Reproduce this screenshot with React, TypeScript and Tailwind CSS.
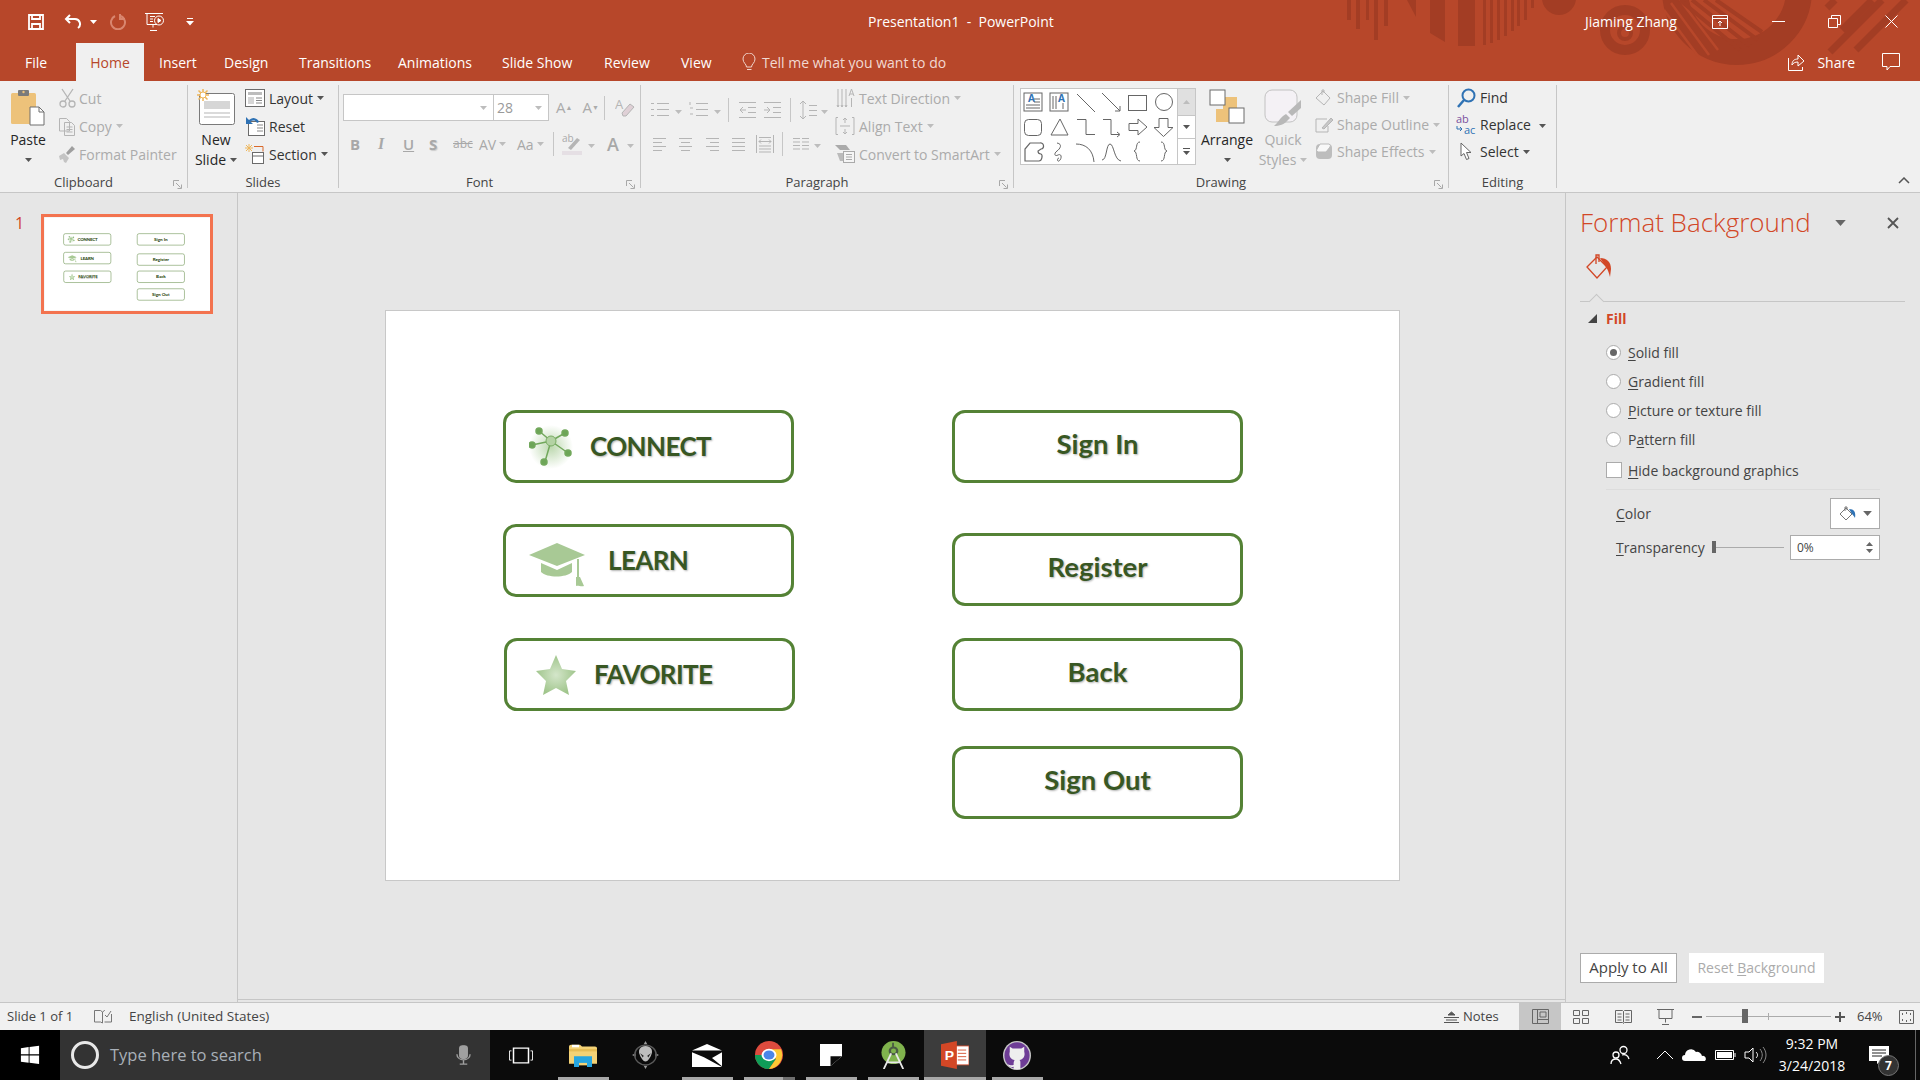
import type { ReactNode } from "react";

const Caret = ({ className = "fill-[#6a6a6a]" }: { className?: string }) => (
  <svg width="7" height="4" viewBox="0 0 7 4" className={`${className} inline-block shrink-0`}>
    <path d="M0 0h7L3.5 4z" />
  </svg>
);

const GRAY = "#b5b5b5";

function Launcher() {
  return (
    <svg width="9" height="9" viewBox="0 0 9 9" className="absolute right-[5px] bottom-[-1px]" fill="none" stroke="#a8a8a8">
      <path d="M.5 6V.5H6M3 3l4.500 4.500M8.500 4.500v4h-4" />
    </svg>
  );
}

function Group({ w, label, launcher, children }: { w: string; label: string; launcher?: boolean; children: ReactNode }) {
  return (
    <div className={`${w} relative h-[103px] shrink-0 border-r border-[#c6c6c6]`}>
      <div className="flex h-[87px]">{children}</div>
      <div className={`h-[16px] text-center text-[13px] leading-[21px] text-[#444] ${launcher ? "pr-[20px]" : ""}`}>{label}</div>
      {launcher && <Launcher />}
    </div>
  );
}

function Row({ icon, label, off, caret, iconW = "w-[22px]", tight }: { icon: ReactNode; label: ReactNode; off?: boolean; caret?: boolean; iconW?: string; tight?: boolean }) {
  return (
    <div className={`flex ${tight ? "h-[27px]" : "h-[28px]"} items-center whitespace-nowrap ${off ? "text-[#ababab]" : "text-[#333]"}`}>
      <span className={`${iconW} flex shrink-0 justify-center`}>{icon}</span>
      <span className="ml-[3px]">{label}</span>
      {caret && <span className="ml-[4px] flex"><Caret className={off ? "fill-[#bdbdbd]" : "fill-[#555]"} /></span>}
    </div>
  );
}

function Big({ w, icon, lines, off, caretLine }: { w: string; icon: ReactNode; lines: string[]; off?: boolean; caretLine?: boolean }) {
  return (
    <div className={`${w} flex shrink-0 flex-col items-center ${off ? "text-[#ababab]" : "text-[#262626]"}`}>
      <div className="flex h-[45px] w-full justify-center pt-[4px]">{icon}</div>
      {lines.map((l, i) => (
        <div key={l} className="flex h-[20px] items-center gap-[4px] whitespace-nowrap leading-[20px]">
          {l}
          {caretLine && i === lines.length - 1 && <Caret className={off ? "fill-[#bdbdbd]" : "fill-[#555]"} />}
        </div>
      ))}
      {!caretLine && (
        <div className="flex h-[20px] items-center"><Caret className="fill-[#555]" /></div>
      )}
    </div>
  );
}

const PasteIcon = () => (
  <svg width="36" height="37" viewBox="0 0 36 37">
    <rect x="1" y="4" width="25" height="31" rx="1.500" fill="#edc27a" />
    <rect x="8" y="1" width="11" height="6" rx="1" fill="#7b7b7b" />
    <circle cx="13.500" cy="3" r="1.200" fill="#edc27a" />
    <path d="M20 18h9l5 5v13H20z" fill="#fff" stroke="#6e6e6e" />
    <path d="M29 18v5h5" fill="none" stroke="#6e6e6e" />
  </svg>
);
const CutIcon = () => (
  <svg width="17" height="20" viewBox="0 0 17 20" fill="none" stroke={GRAY} strokeWidth="1.300">
    <path d="M3 1l8 12M14 1L6 13" />
    <circle cx="4" cy="16" r="3" />
    <circle cx="13" cy="16" r="3" />
  </svg>
);
const CopyIcon = () => (
  <svg width="18" height="19" viewBox="0 0 18 19" fill="none" stroke={GRAY}>
    <path d="M1.500 1.500h7l3 3V14h-10zM6.500 5.500h7l3 3v10h-10z" fill="#f0f0f0" />
    <path d="M8.500 10h6M8.500 12.500h6M8.500 15h6" />
  </svg>
);
const PainterIcon = () => (
  <svg width="18" height="18" viewBox="0 0 18 18">
    <path d="M1 11l5-3 5 5-3 5-2-1-1-3-3 1z" fill="#c4c4c4" />
    <path d="M8 8l6-7 3 3-7 6z" fill="#9f9f9f" />
  </svg>
);
const NewSlideIcon = () => (
  <svg width="40" height="37" viewBox="0 0 40 37">
    <rect x="3.500" y="4.500" width="35" height="31" rx="2" fill="#fff" stroke="#7a7a7a" />
    <rect x="8" y="12" width="26" height="8" fill="#d6d6d6" />
    <path d="M8 24h26M8 28h26" stroke="#b5b5b5" />
    <g stroke="#eeb75c" strokeWidth="1.500">
      <path d="M7 0v12M1 6h12M2.500 1.500l9 9M11.500 1.500l-9 9" />
    </g>
    <circle cx="7" cy="6" r="3" fill="#fff" stroke="#eeb75c" />
  </svg>
);
const LayoutIcon = () => (
  <svg width="20" height="18" viewBox="0 0 20 18">
    <rect x=".5" y=".5" width="19" height="17" fill="#fff" stroke="#6b6b6b" />
    <rect x="3" y="3" width="14" height="3" fill="#bdbdbd" />
    <rect x="3" y="8" width="6" height="7" fill="#d6d6d6" />
    <path d="M11 9h6M11 11.500h6M11 14h6" stroke="#888" />
  </svg>
);
const ResetIcon = () => (
  <svg width="21" height="20" viewBox="0 0 21 20">
    <rect x="3.500" y="5.500" width="16" height="14" fill="#fff" stroke="#6b6b6b" />
    <path d="M12 9h6M12 12h6M12 15h6" stroke="#888" />
    <path d="M1 1v7h7L5.500 5.500A4 4 0 0 1 12 7l2-1a6 6 0 0 0-10-2z" fill="#2f72b4" />
  </svg>
);
const SectionIcon = () => (
  <svg width="20" height="20" viewBox="0 0 20 20">
    <g stroke="#eeb75c"><path d="M4 0v8M0 4h8M1 1l6 6M7 1L1 7" /></g>
    <path d="M9 2.500h9v5" fill="none" stroke="#d9692b" />
    <rect x="7.500" y="8.500" width="11" height="11" fill="#fff" stroke="#6b6b6b" />
    <path d="M7 12h12" stroke="#6b6b6b" />
  </svg>
);

function FontGroup() {
  return (
    <div className="flex w-full flex-col pl-[4px] pt-[9px]">
      <div className="flex h-[27px] items-center">
        <div className="flex h-[27px] w-[151px] items-center justify-end border border-[#c6c6c6] bg-white pr-[6px]">
          <Caret className="fill-[#bdbdbd]" />
        </div>
        <div className="flex h-[27px] w-[55px] items-center justify-between border border-l-0 border-[#c6c6c6] bg-white pl-[3px] pr-[6px] leading-none text-[#9a9a9a]">
          28
          <Caret className="fill-[#bdbdbd]" />
        </div>
        <div className="ml-[7px] flex gap-[10px] text-[15px] leading-none text-[#ababab]">
          <span>A<sup className="text-[7px]">▲</sup></span>
          <span>A<sup className="text-[7px]">▼</sup></span>
        </div>
        <div className="ml-[5px] h-[24px] border-l border-[#c6c6c6]" />
        <svg width="20" height="22" viewBox="0 0 20 22" className="ml-[10px]">
          <text x="0" y="12" fontSize="13" fill="#b5b5b5">A</text>
          <path d="M7 16l8-9 4 3-8 9H8z" fill="#dfd0d6" stroke="#b5b5b5" />
        </svg>
      </div>
      <div className="mt-[11px] flex h-[24px] items-center text-[#a8a8a8]">
        <span className="ml-[7px] w-[26px] text-[15px] font-bold">B</span>
        <span className="w-[27px] pl-[2px] font-['Liberation_Serif',serif] text-[16px] font-bold italic">I</span>
        <span className="w-[26px] text-[15px] font-semibold underline">U</span>
        <span className="w-[24px] text-[15px] font-bold [text-shadow:1px_1px_1px_#ccc]">S</span>
        <span className="w-[26px] text-[12px] line-through">abc</span>
        <span className="flex w-[38px] items-center gap-[3px] text-[14px]">AV<Caret className="fill-[#bdbdbd]" /></span>
        <span className="flex w-[36px] items-center gap-[3px] text-[14px]">Aa<Caret className="fill-[#bdbdbd]" /></span>
        <div className="h-[24px] border-l border-[#c6c6c6]" />
        <svg width="24" height="22" viewBox="0 0 24 22" className="ml-[8px]">
          <text x="0" y="9" fontSize="10" fill="#aaa">ab</text>
          <path d="M6 15L15 5l3 2-9 10z" fill="#b5b5b5" />
          <rect x="0" y="18" width="20" height="4" fill="#e5dfe4" />
        </svg>
        <span className="ml-[2px] mr-[12px]"><Caret className="fill-[#bdbdbd]" /></span>
        <span className="text-[18px] font-semibold">A</span>
        <span className="ml-[8px]"><Caret className="fill-[#bdbdbd]" /></span>
      </div>
    </div>
  );
}

const Lines = ({ d, w = 16, h = 16 }: { d: string; w?: number; h?: number }) => (
  <svg width={w} height={h} viewBox={`0 0 ${w} ${h}`} fill="none" stroke={GRAY}>
    <path d={d} />
  </svg>
);

function ParagraphGroup() {
  return (
    <div className="flex">
      <div className="w-[193px] pt-[14px]">
        <div className="flex h-[22px] items-center">
          <span className="ml-[9px]"><Lines w={20} h={18} d="M7 2.500h12M7 8.500h12M7 14.500h12M1 2.500h3M1 8.500h3M1 14.500h3" /></span>
          <span className="ml-[5px]"><Caret className="fill-[#bdbdbd]" /></span>
          <span className="ml-[7px]"><Lines w={20} h={18} d="M7 2.500h12M7 8.500h12M7 14.500h12M1 1v3M1 7h3M1 13h3" /></span>
          <span className="ml-[5px]"><Caret className="fill-[#bdbdbd]" /></span>
          <div className="ml-[7px] h-[24px] border-l border-[#c6c6c6]" />
          <span className="ml-[9px]"><Lines w={19} h={18} d="M1 1.500h17M10 6.500h8M10 11.500h8M1 16.500h17M8 9H2M5 6L2 9l3 3" /></span>
          <span className="ml-[6px]"><Lines w={19} h={18} d="M1 1.500h17M10 6.500h8M10 11.500h8M1 16.500h17M1 9h6M4 6l3 3-3 3" /></span>
          <div className="ml-[8px] h-[24px] border-l border-[#c6c6c6]" />
          <span className="ml-[8px]"><Lines w={18} h={20} d="M4 1v18M1 4l3-3 3 3M1 16l3 3 3-3M10 5.500h8M10 10.500h8M10 15.500h8" /></span>
          <span className="ml-[4px]"><Caret className="fill-[#bdbdbd]" /></span>
        </div>
        <div className="mt-[12px] flex h-[22px] items-center">
          <span className="ml-[11px]"><Lines w={15} d="M1 2.500h13M1 6.500h9M1 10.500h13M1 14.500h9" /></span>
          <span className="ml-[11px]"><Lines w={15} d="M1 2.500h13M3 6.500h9M1 10.500h13M3 14.500h9" /></span>
          <span className="ml-[12px]"><Lines w={15} d="M1 2.500h13M5 6.500h9M1 10.500h13M5 14.500h9" /></span>
          <span className="ml-[11px]"><Lines w={15} d="M1 2.500h13M1 6.500h13M1 10.500h13M1 14.500h13" /></span>
          <span className="ml-[10px]"><Lines w={18} h={20} d="M.5 1v18M17.500 1v18M3 3.500h12M3 12h12M3 15h12M3 18h12M3 7.500h12M3 7.500l2-2M3 7.500l2 2M15 7.500l-2-2M15 7.500l-2 2" /></span>
          <div className="ml-[8px] h-[24px] border-l border-[#c6c6c6]" />
          <span className="ml-[9px]"><Lines w={18} h={14} d="M1 1.500h7M1 5h7M1 8.500h7M1 12h7M10 1.500h7M10 5h7M10 8.500h7M10 12h7" /></span>
          <span className="ml-[4px]"><Caret className="fill-[#bdbdbd]" /></span>
        </div>
      </div>
      <div className="mt-[-1px] flex flex-col">
        <Row off caret label="Text Direction" icon={<Lines w={19} h={22} d="M2 2v18M6 2v18M10 2v18M1 18l1 2 1-2M5 18l1 2 1-2M9 18l1 2 1-2M13 9l2.500-7L18 9M14 7h3M15.500 11v9" />} />
        <Row off caret label="Align Text" icon={<Lines w={20} h={20} d="M3 1.500H1v17h2M17 1.500h2v17h-2M5 10h10M10 2v5M8 4l2-2 2 2M10 18v-5M8 16l2 2 2-2" />} />
        <Row off caret label="Convert to SmartArt" icon={
          <svg width="20" height="18" viewBox="0 0 20 18"><path d="M0 0h11l4 5H5z" fill="#aaa" /><path d="M2 8h6l3 4-3 4H5z" fill="#bbb" /><rect x="8.500" y="6.500" width="11" height="11" fill="#f5f5f5" stroke="#aaa" /><path d="M11 9.500h6M11 12h6M11 14.500h6" stroke="#aaa" /></svg>
        } />
      </div>
    </div>
  );
}

const shapes: ReactNode[] = [
  <><rect x="1" y="2" width="18" height="18" fill="none" stroke="#666" /><text x="5" y="11" fontSize="10" fontWeight="700" fill="#2f72b4">A</text><path d="M11 8h6M11 11h6M3 14h14M3 17h14" stroke="#666" /></>,
  <><rect x="1" y="2" width="18" height="18" fill="none" stroke="#666" /><text x="9" y="11" fontSize="10" fontWeight="700" fill="#2f72b4">A</text><path d="M4 5v13M7 5v13M14 12v6" stroke="#666" /></>,
  <path d="M2 3l18 18" stroke="#666" fill="none" />,
  <path d="M1 2l18 18M14 20h5v-5" stroke="#666" fill="none" />,
  <rect x="1.500" y="4.500" width="18" height="15" fill="none" stroke="#666" />,
  <circle cx="11" cy="11" r="8.500" fill="none" stroke="#666" />,
  <rect x="1.500" y="3.500" width="17" height="16" rx="4" fill="none" stroke="#666" />,
  <path d="M11 3l8 16H2z" fill="none" stroke="#666" />,
  <path d="M2 3.500h9v15h9" fill="none" stroke="#666" />,
  <path d="M2 3.500h8v15h8M16 16l3 2.500-3 2.500" fill="none" stroke="#666" />,
  <path d="M2 7.500h9V3l9 8-9 8v-4.500H2z" fill="none" stroke="#666" />,
  <path d="M6 2.500h9v9h5l-9.500 9-9.500-9h5z" fill="none" stroke="#666" />,
  <path d="M2 20V8l5-6h10a3 3 0 0 1 1 6l-3 2a3 3 0 0 0 3 3c2 1 1 7-2 7z" fill="none" stroke="#666" strokeWidth="1.200" />,
  <path d="M8 2c6 1 3 6 0 8s-3 6 1 4 4 4 1 6c-2 1-2-3 0-3" fill="none" stroke="#666" />,
  <path d="M1 3c10 0 17 6 18 18" fill="none" stroke="#666" />,
  <path d="M1 19C6 19 5 3 9 3s4 16 11 17" fill="none" stroke="#666" />,
  <path d="M13 1c-5 0-2 8-6 9 4 1 1 10 6 10" fill="none" stroke="#666" />,
  <path d="M8 1c5 0 2 8 6 9-4 1-1 10-6 10" fill="none" stroke="#666" />,
];

function Gallery() {
  return (
    <div className="ml-[6px] mt-[3px] flex h-[77px] w-[176px] shrink-0 border border-[#c6c6c6] bg-white">
      <div className="grid w-[157px] grid-cols-[repeat(6,26px)] grid-rows-[repeat(3,25px)]">
        {shapes.map((s, i) => (
          <div key={i} className="flex items-center justify-center">
            <svg width="22" height="22" viewBox="0 0 22 22">{s}</svg>
          </div>
        ))}
      </div>
      <div className="flex w-[18px] flex-col border-l border-[#c6c6c6]">
        <div className="flex h-[26px] items-center justify-center bg-[#e0e0e0]"><Caret className="rotate-180 fill-[#bdbdbd]" /></div>
        <div className="flex h-[24px] items-center justify-center border-y border-[#c6c6c6]"><Caret className="fill-[#555]" /></div>
        <div className="flex h-[25px] flex-col items-center justify-center gap-[2px]"><span className="h-px w-[7px] bg-[#555]" /><Caret className="fill-[#555]" /></div>
      </div>
    </div>
  );
}

const ArrangeIcon = () => (
  <svg width="36" height="36" viewBox="0 0 36 36">
    <rect x="14" y="8" width="14" height="14" fill="#edc27a" />
    <rect x="7" y="20" width="14" height="13" fill="#edc27a" />
    <rect x="1" y="1" width="15" height="15" fill="#fff" stroke="#6b6b6b" />
    <rect x="20" y="19" width="15" height="15" fill="#fff" stroke="#6b6b6b" />
  </svg>
);
const QuickIcon = () => (
  <svg width="38" height="38" viewBox="0 0 38 38">
    <rect x="1" y="1" width="32" height="32" rx="7" fill="#f4f1f5" stroke="#c2c2c2" />
    <path d="M37 11v8l-9 8-4-4z" fill="#b8b8b8" />
    <path d="M22 25l4 4-3 3c-2 3-8 5-13 5 4-3 5-7 9-10z" fill="#b8b8b8" />
  </svg>
);

function Drawing() {
  return (
    <div className="flex">
      <Gallery />
      <Big w="w-[56px] ml-[3px]" icon={<ArrangeIcon />} lines={["Arrange"]} />
      <Big w="w-[56px]" off caretLine icon={<QuickIcon />} lines={["Quick", "Styles"]} />
      <div className="ml-[3px] mt-[-1px] flex flex-col">
        <Row tight off caret iconW="w-[20px]" label="Shape Fill" icon={<svg width="18" height="18" viewBox="0 0 18 18" fill="none" stroke={GRAY}><path d="M1 9l7-7 7 7-6 7z" /><path d="M7 6V1h2v3" /></svg>} />
        <Row tight off caret iconW="w-[20px]" label="Shape Outline" icon={<svg width="19" height="16" viewBox="0 0 19 16" fill="none" stroke={GRAY}><path d="M12 2H1v13h12V9" /><path d="M7 11l9-10 2 2-9 9z" fill="#c8c8c8" /></svg>} />
        <Row tight off caret iconW="w-[20px]" label="Shape Effects" icon={<svg width="18" height="17" viewBox="0 0 18 17"><rect x="1" y="1" width="16" height="15" rx="4" fill="#bdbdbd" /><path d="M5 1h9a2 2 0 0 1 1 3l-4 5H3a2 2 0 0 1-1-3z" fill="#f8f8f8" stroke="#bbb" /></svg>} />
      </div>
    </div>
  );
}

function Editing() {
  return (
    <div className="mt-[-1px] flex flex-col pl-[6px]">
      <Row tight label="Find" icon={<svg width="19" height="20" viewBox="0 0 19 20" fill="none" stroke="#2f72b4"><circle cx="11.500" cy="7.500" r="6" strokeWidth="2" /><path d="M7 12l-6 7" strokeWidth="2.500" /></svg>} />
      <div className="flex items-center">
        <Row tight label="Replace" icon={<svg width="21" height="21" viewBox="0 0 21 21"><text x="0" y="9" fontSize="11" fill="#7a4f9e">ab</text><text x="8" y="20" fontSize="11" fill="#2f72b4">ac</text><path d="M1 12v3h5M4 13l2 2-2 2" fill="none" stroke="#2f72b4" /></svg>} />
        <span className="ml-[8px]"><Caret className="fill-[#555]" /></span>
      </div>
      <Row tight caret label="Select" icon={<svg width="12" height="19" viewBox="0 0 12 19" fill="#fff" stroke="#666"><path d="M1 1v13l3-2.500 2.500 6 2.500-1-2.500-6H11z" /></svg>} />
    </div>
  );
}

function Ribbon() {
  return (
    <div className="relative flex h-[112px] border-b border-[#c6c6c6] bg-[#f0f0f0] pt-[4px] text-[14px]">
      <Group w="w-[188px]" label="Clipboard" launcher>
        <Big w="w-[56px]" icon={<PasteIcon />} lines={["Paste"]} />
        <div className="mt-[-1px] flex flex-col pl-[2px]">
          <Row off iconW="w-[18px]" label="Cut" icon={<CutIcon />} />
          <Row off caret iconW="w-[18px]" label="Copy" icon={<CopyIcon />} />
          <Row off iconW="w-[18px]" label="Format Painter" icon={<PainterIcon />} />
        </div>
      </Group>
      <Group w="w-[151px]" label="Slides">
        <Big w="w-[56px]" caretLine icon={<NewSlideIcon />} lines={["New", "Slide"]} />
        <div className="mt-[-1px] flex flex-col">
          <Row caret label="Layout" icon={<LayoutIcon />} />
          <Row label="Reset" icon={<ResetIcon />} />
          <Row caret label="Section" icon={<SectionIcon />} />
        </div>
      </Group>
      <Group w="w-[302px]" label="Font" launcher><FontGroup /></Group>
      <Group w="w-[373px]" label="Paragraph" launcher><ParagraphGroup /></Group>
      <Group w="w-[435px]" label="Drawing" launcher><Drawing /></Group>
      <Group w="w-[108px]" label="Editing"><Editing /></Group>
      <svg width="12" height="7" viewBox="0 0 12 7" className="absolute bottom-[8px] right-[10px]" fill="none" stroke="#555" strokeWidth="1.500">
        <path d="M1 6l5-5 5 5" />
      </svg>
    </div>
  );
}

function TitleArt() {
  return (
    <svg width="1920" height="81" viewBox="0 0 1920 81" className="absolute left-0 top-0" fill="#a33d24">
      <path d="M1347 0h4v20h-4zM1356 0h4v29h-4zM1366 0h3v20h-3zM1374 0h4v40h-4zM1384 0h4v26h-4z" />
      <path d="M1407 0h9v17zM1430 0h15v42l-15-9zM1458 0h17v46h-17z" />
      <path d="M1483 0h3v45h-3zM1490 0h3v43h-3zM1497 0h3v40h-3zM1504 0h3v36h-3zM1511 0h3v31h-3zM1517 0h3v26h-3zM1524 0h3v20h-3zM1531 0h3v8h-3z" />
      <ellipse cx="1559" cy="-2" rx="17" ry="17" />
      <circle cx="1625" cy="30" r="20" fill="none" stroke="#a33d24" strokeWidth="10" />
      <circle cx="1625" cy="33" r="6" fill="none" stroke="#a33d24" strokeWidth="4" />
      <circle cx="1737" cy="-10" r="62" fill="none" stroke="#a33d24" strokeWidth="26" />
      <g stroke="#b7472a" strokeWidth="2.500" fill="none">
        <path d="M1664 10l34 46M1671 3l38 52M1680 0l38 50" />
      </g>
      <g stroke="#a33d24" strokeWidth="4" fill="none">
        <path d="M1680 0l60 50M1692 0l58 46M1704 0l54 40M1716 0l46 32" />
      </g>
      <g stroke="#a33d24" strokeWidth="7" fill="none">
        <path d="M1827 8l8-8M1842 30l30-30M1830 52l52-52M1856 50l50-50" />
      </g>
    </svg>
  );
}

function TitleBar() {
  const tabs = [
    ["Insert", "w-[65px]"],
    ["Design", "w-[75px]"],
    ["Transitions", "w-[99px]"],
    ["Animations", "w-[104px]"],
    ["Slide Show", "w-[102px]"],
    ["Review", "w-[77px]"],
    ["View", "w-[61px]"],
  ];
  return (
    <div className="relative h-[81px] bg-[#b7472a] text-white">
      <TitleArt />
      <div className="relative flex h-[43px] items-center">
        <svg width="16" height="16" viewBox="0 0 16 16" className="ml-[28px]" fill="none" stroke="#fff" strokeWidth="1.800">
          <path d="M1 1h14v14H1z" /><path d="M4 1v4h8V1M4 15v-5h8v5" />
        </svg>
        <svg width="18" height="16" viewBox="0 0 18 16" className="ml-[20px]" fill="none" stroke="#fff" strokeWidth="2">
          <path d="M6 1L2 5l4 4M2 5h9a5 5 0 0 1 3 9" />
        </svg>
        <Caret className="ml-[8px] fill-white" />
        <svg width="16" height="17" viewBox="0 0 16 17" className="ml-[13px]" fill="none" stroke="#d9866f" strokeWidth="2">
          <path d="M5 3a7 7 0 1 0 6 0M10 1v5h5" />
        </svg>
        <svg width="20" height="19" viewBox="0 0 20 19" className="ml-[19px]" fill="none" stroke="#fff">
          <path d="M0 1.500h18M2 1.500v11h10M8 12.500v3M5 18.500h7" />
          <path d="M5 4.500h5M5 7h3M5 9.500h3" />
          <circle cx="14" cy="8.500" r="4.500" />
          <path d="M13 6.500l3 2-3 2z" fill="#fff" />
        </svg>
        <svg width="8" height="8" viewBox="0 0 8 8" className="ml-[21px]" fill="#fff">
          <path d="M1 0h6v1H1zM0 3h8L4 7.500z" />
        </svg>
        <div className="ml-[674px] w-[190px] whitespace-nowrap text-[14px]">Presentation1&nbsp; - &nbsp;PowerPoint</div>
        <div className="ml-[527px] w-[102px] whitespace-nowrap text-[14px]">Jiaming Zhang</div>
        <svg width="16" height="14" viewBox="0 0 16 14" className="ml-[25px]" fill="none" stroke="#fff">
          <path d="M.5.500h15v13H.5zM.5 3.500h15M8 11V6M6 8l2-2 2 2" />
        </svg>
        <span className="ml-[44px] h-px w-[13px] bg-white" />
        <svg width="13" height="13" viewBox="0 0 13 13" className="ml-[43px]" fill="none" stroke="#fff">
          <path d="M.5 3.500h9v9h-9zM3.500 3.500v-3h9v9h-3" />
        </svg>
        <svg width="13" height="13" viewBox="0 0 13 13" className="ml-[44px]" fill="none" stroke="#fff">
          <path d="M.5.500l12 12M12.500.500l-12 12" />
        </svg>
      </div>
      <div className="relative flex h-[38px] items-center whitespace-nowrap text-[14px]">
        <span className="w-[76px] pl-[25px]">File</span>
        <div className="flex h-[38px] w-[68px] items-center justify-center bg-[#f0f0f0] text-[#b7472a]">Home</div>
        <span className="w-[15px]" />
        {tabs.map(([t, m]) => (
          <span key={t} className={m}>{t}</span>
        ))}
        <svg width="14" height="19" viewBox="0 0 14 19" fill="none" stroke="#f0d5cc">
          <path d="M4.500 14c0-3-3.500-4-3.500-8a6 6 0 0 1 12 0c0 4-3.500 5-3.500 8zM5 16.500h4.500" />
        </svg>
        <span className="ml-[6px] text-[#f2d9d2]">Tell me what you want to do</span>
        <svg width="17" height="18" viewBox="0 0 17 18" className="ml-auto" fill="none" stroke="#fff">
          <path d="M.5 5v12.500h14V14M4 12c0-4 2-6 6-6V2l6 6-6 5V9c-3 0-5 1-6 3z" />
        </svg>
        <span className="ml-[12px]">Share</span>
        <svg width="18" height="18" viewBox="0 0 18 18" className="ml-[27px] mr-[20px]" fill="none" stroke="#fff">
          <path d="M.5.500h17v13H8l-3 3.500v-3.500H.500z" />
        </svg>
      </div>
    </div>
  );
}

function SlideBtn({ children, className = "" }: { children: ReactNode; className?: string }) {
  return (
    <div className={`flex h-[73px] w-[291px] items-center rounded-[13px] border-[3px] border-[#548235] font-['Lato','Carlito',sans-serif] font-bold text-[#385723] [text-shadow:1px_1px_2px_rgba(0,0,0,0.3)] ${className}`}>
      {children}
    </div>
  );
}

const capsText = "text-[26px] tracking-[-0.6px]";
const nameText = "text-[27.5px] justify-center pb-[5px]";

function Slide() {
  return (
    <div className="flex h-[571px] w-[1015px] gap-[157px] border border-[#c8c8c8] bg-white pl-[117px] pt-[99px]">
      <div className="flex flex-col">
        <SlideBtn className={`pl-[23px] ${capsText}`}>
          <svg width="44" height="44" viewBox="0 0 44 44" className="shrink-0">
            <defs>
              <radialGradient id="cg"><stop offset="0" stopColor="#bcd8ae" /><stop offset="1" stopColor="#fff" /></radialGradient>
            </defs>
            <circle cx="22" cy="22" r="22" fill="url(#cg)" />
            <g stroke="#72a85c" strokeWidth="1.500" fill="#6da557">
              <path d="M22 16L10 6M22 16l14-8M22 16L3 20M22 16l17 12M22 16l-7 24" fill="none" />
              <circle cx="10" cy="6" r="3" /><circle cx="36" cy="8" r="3" /><circle cx="3" cy="20" r="3" /><circle cx="39" cy="28" r="3" /><circle cx="15" cy="37" r="3" />
            </g>
            <circle cx="22" cy="16" r="5" fill="#b3d2a3" stroke="#7aad65" />
          </svg>
          <span className="ml-[17px]">CONNECT</span>
        </SlideBtn>
        <SlideBtn className={`mt-[41px] pl-[23px] ${capsText}`}>
          <svg width="56" height="52" viewBox="0 0 56 52" className="shrink-0" fill="#a8c995">
            <path d="M28 8L56 20 28 31 0 20z" />
            <path d="M12 28l16 7 15-7v9c-6 6-25 6-31 0z" />
            <path d="M48 24h2v18h-2z" />
            <path d="M47 42h4l4 9c-3 1-6-1-8 0z" />
          </svg>
          <span className="ml-[23px]">LEARN</span>
        </SlideBtn>
        <SlideBtn className={`ml-[1px] mt-[41px] pl-[29px] ${capsText}`}>
          <svg width="40" height="42" viewBox="0 0 40 42" className="shrink-0">
            <defs>
              <radialGradient id="sg"><stop offset="0" stopColor="#d4e6ca" /><stop offset="1" stopColor="#a0c58c" /></radialGradient>
            </defs>
            <path d="M20 1l6 14 14 2-10 10 3 14-13-7-13 7 3-14L0 17l14-2z" fill="url(#sg)" />
          </svg>
          <span className="ml-[18px]">FAVORITE</span>
        </SlideBtn>
      </div>
      <div className="flex flex-col text-center">
        <SlideBtn className={nameText}>Sign In</SlideBtn>
        <SlideBtn className={`mt-[50px] ${nameText}`}>Register</SlideBtn>
        <SlideBtn className={`mt-[32px] ${nameText}`}>Back</SlideBtn>
        <SlideBtn className={`mt-[35px] ${nameText}`}>Sign Out</SlideBtn>
      </div>
    </div>
  );
}

function Mn({ k, rest, pre = "" }: { k: string; rest: string; pre?: string }) {
  return <span>{pre}<span className="underline underline-offset-2">{k}</span>{rest}</span>;
}

function Radio({ on, children }: { on?: boolean; children: ReactNode }) {
  return (
    <div className="flex h-[29px] items-center">
      <span className="flex h-[15px] w-[15px] items-center justify-center rounded-full border border-[#ababab] bg-white">
        {on && <span className="h-[7px] w-[7px] rounded-full bg-[#666]" />}
      </span>
      <span className="ml-[7px]">{children}</span>
    </div>
  );
}

const BucketIcon = () => (
  <svg width="18" height="16" viewBox="0 0 18 16" fill="none" stroke="#777">
    <path d="M1 8l6-6 6 6-6 6z" fill="#fff" /><path d="M6 5V1h2v3" />
    <path d="M10 3c5 0 7 3 6 9-1-2-2-3-3-4z" fill="#2f72b4" stroke="none" />
  </svg>
);

function FormatPane() {
  return (
    <div className="flex w-[355px] shrink-0 flex-col border-l border-[#c6c6c6] text-[14px] text-[#444]">
      <div className="mt-[12px] flex h-[35px] items-center pl-[14px]">
        <span className="w-[255px] whitespace-nowrap text-[26px] font-light text-[#d24726]">Format Background</span>
        <Caret className="h-[6px] w-[11px] fill-[#666]" />
        <svg width="12" height="12" viewBox="0 0 12 12" stroke="#555" strokeWidth="1.800" className="ml-[41px]">
          <path d="M1 1l10 10M11 1L1 11" />
        </svg>
      </div>
      <svg width="28" height="28" viewBox="0 0 28 28" className="ml-[20px] mt-[14px]" fill="none" stroke="#d24726" strokeWidth="1.300">
        <path d="M1 13L11 3l10 10-10 11z" />
        <path d="M10 10V1h3v7" />
        <path d="M14 4c7 0 11 4 11 11l-1 8c-1-4-2-7-4-10z" fill="#d24726" stroke="none" />
      </svg>
      <div className="relative ml-[14px] mt-[19px] h-px w-[325px] bg-[#c6c6c6]">
        <span className="absolute left-[11px] top-[-5px] h-[11px] w-[11px] rotate-45 border-l border-t border-[#c6c6c6] bg-[#e6e6e6]" />
      </div>
      <div className="mt-[8px] flex h-[16px] items-center pl-[22px]">
        <svg width="9" height="9" viewBox="0 0 9 9" fill="#444"><path d="M9 0v9H0z" /></svg>
        <span className="ml-[9px] font-bold text-[#d24726]">Fill</span>
      </div>
      <div className="ml-[40px] mt-[12px] w-[274px]">
        <Radio on><Mn k="S" rest="olid fill" /></Radio>
        <Radio><Mn k="G" rest="radient fill" /></Radio>
        <Radio><Mn k="P" rest="icture or texture fill" /></Radio>
        <Radio><Mn pre="P" k="a" rest="ttern fill" /></Radio>
        <div className="flex h-[36px] items-center border-b border-[#dcdcdc] pb-[3px]">
          <span className="h-[16px] w-[16px] border border-[#ababab] bg-white" />
          <span className="ml-[6px]"><Mn k="H" rest="ide background graphics" /></span>
        </div>
      </div>
      <div className="ml-[50px] mt-[8px] flex h-[31px] w-[264px] items-center justify-between">
        <Mn k="C" rest="olor" />
        <div className="flex h-[31px] w-[50px] items-center justify-center gap-[6px] border border-[#ababab] bg-white">
          <BucketIcon />
          <Caret className="h-[5px] w-[9px] fill-[#666]" />
        </div>
      </div>
      <div className="ml-[50px] mt-[6px] flex h-[25px] w-[264px] items-center">
        <span className="w-[96px]"><Mn k="T" rest="ransparency" /></span>
        <div className="relative h-px w-[72px] bg-[#ababab]">
          <span className="absolute left-0 top-[-6px] h-[12px] w-[4px] bg-[#666]" />
        </div>
        <div className="ml-[6px] flex h-[25px] w-[90px] items-center justify-between border border-[#ababab] bg-white pl-[6px] pr-[6px] text-[12px]">
          0%
          <span className="flex flex-col gap-[3px]">
            <Caret className="rotate-180 fill-[#666]" />
            <Caret className="fill-[#666]" />
          </span>
        </div>
      </div>
      <div className="mb-[19px] ml-[14px] mt-auto flex gap-[12px] whitespace-nowrap">
        <div className="flex h-[30px] w-[97px] items-center justify-center border border-[#ababab] bg-white pb-[2px] text-[15px]"><span>App<span className="underline underline-offset-2">l</span>y to All</span></div>
        <div className="flex h-[30px] w-[135px] items-center justify-center bg-white pb-[2px] text-[#ababab]"><Mn pre="Reset " k="B" rest="ackground" /></div>
      </div>
    </div>
  );
}

function Main() {
  return (
    <div className="flex h-[810px] border-b border-[#c6c6c6] bg-[#e6e6e6]">
      <div className="flex w-[238px] shrink-0 border-r border-[#c6c6c6]">
        <span className="ml-[15px] mt-[18px] text-[16px] leading-[24px] text-[#d24726]">1</span>
        <div className="relative ml-[17px] mt-[21px] h-[100px] w-[172px] overflow-hidden border-[3px] border-[#f3734f] bg-white">
          <div className="absolute left-0 top-0 origin-top-left scale-[0.164]"><Slide /></div>
        </div>
      </div>
      <div className="flex flex-1 flex-col">
        <div className="flex h-[807px] border-b border-[#c6c6c6] pl-[147px] pt-[117px]">
          <Slide />
        </div>
      </div>
      <FormatPane />
    </div>
  );
}

function StatusBar() {
  return (
    <div className="flex h-[27px] items-center whitespace-nowrap bg-[#f1f1f1] text-[13px] text-[#444]">
      <span className="ml-[7px] w-[87px]">Slide 1 of 1</span>
      <svg width="18" height="14" viewBox="0 0 18 14" fill="none" stroke="#777">
        <path d="M.5.500h6l2 1.500 2-1.500H10M8.500 2v11M8.500 13l-2-1H.5V.5M10.500 12h7V4M11 5l2 2 4-6" />
      </svg>
      <span className="ml-[17px] text-[13.5px]">English (United States)</span>
      <svg width="15" height="12" viewBox="0 0 15 12" className="ml-auto" fill="none" stroke="#555">
        <path d="M4 4l3.500-3L11 4z" fill="#555" /><path d="M0 6.500h15M2 9h11M0 11.500h15" />
      </svg>
      <span className="ml-[4px] w-[35px]">Notes</span>
      <div className="ml-[21px] flex h-[27px] w-[42px] items-center justify-center bg-[#c6c6c6]">
        <svg width="17" height="15" viewBox="0 0 17 15" fill="none" stroke="#666"><path d="M.5.500h16v14H.5zM5.500.5v14M5.500 10.500h11M8 3h6v5H8z" /></svg>
      </div>
      <svg width="16" height="14" viewBox="0 0 16 14" className="ml-[12px]" fill="none" stroke="#666"><path d="M.5.500h6v5h-6zM9.500.5h6v5h-6zM.5 8.500h6v5h-6zM9.500 8.500h6v5h-6z" /></svg>
      <svg width="17" height="14" viewBox="0 0 17 14" className="ml-[26px]" fill="none" stroke="#666"><path d="M.5.500h7l1 1 1-1h7v12h-7l-1 1-1-1h-7zM8.500 1.500v11M2.500 4h4M2.500 7h4M2.500 10h4M10.500 4h4M10.500 7h4M10.500 10h4" /></svg>
      <svg width="17" height="16" viewBox="0 0 17 16" className="ml-[25px]" fill="none" stroke="#666"><path d="M0 .5h17M2 .5v9h13v-9M8.500 9.500v4M5 15.500h7" /></svg>
      <span className="ml-[18px] h-[2px] w-[10px] bg-[#666]" />
      <div className="relative ml-[4px] h-px w-[125px] bg-[#ababab]">
        <span className="absolute left-[36px] top-[-7px] h-[14px] w-[6px] bg-[#666]" />
        <span className="absolute left-[62px] top-[-3px] h-[7px] w-px bg-[#ababab]" />
      </div>
      <span className="relative ml-[4px] h-[10px] w-[10px]">
        <span className="absolute left-0 top-[4px] h-[2px] w-[10px] bg-[#555]" />
        <span className="absolute left-[4px] top-0 h-[10px] w-[2px] bg-[#555]" />
      </span>
      <span className="ml-[12px] w-[42px]">64%</span>
      <svg width="15" height="14" viewBox="0 0 15 14" className="mr-[6px]" fill="none" stroke="#666"><path d="M.5.500h14v13H.5zM4 3l-1 1 1 1M11 3l1 1-1 1M7.500 2v2M7.500 10v2M4 9l-1 1 1 1M11 9l1 1-1 1" /></svg>
    </div>
  );
}

function Slot({ on, children, bg, extra }: { on?: boolean; children: ReactNode; bg?: boolean; extra?: boolean }) {
  return (
    <div className={`relative flex h-[50px] w-[62px] shrink-0 items-center justify-center ${bg ? "bg-[#3c3c3c]" : ""}`}>
      {children}
      {on && <span className={`absolute bottom-0 h-[3px] bg-[#a8a8a8] ${bg ? "left-0 right-0" : "left-[6px] right-[5px]"}`} />}
      {extra && <span className="absolute bottom-0 right-[5px] h-[3px] w-[12px] bg-[#6f6f6f]" />}
    </div>
  );
}

function Taskbar() {
  return (
    <div className="flex h-[50px] items-center bg-[#0b0b0b] text-white">
      <div className="flex h-[50px] w-[60px] shrink-0 items-center justify-center bg-black">
        <svg width="20" height="20" viewBox="0 0 22 22" fill="#fff"><path d="M1 3.500l8.500-1.200v8H1zM10.500 2.200L21 .8v9.500H10.500zM1 11.500h8.500v8L1 18.300zM10.500 11.500H21V21l-10.500-1.400z" /></svg>
      </div>
      <div className="flex h-[50px] w-[430px] shrink-0 items-center bg-[#333]">
        <span className="ml-[11px] h-[28px] w-[28px] rounded-full border-[3px] border-[#e8e8e8]" />
        <span className="ml-[11px] w-[346px] text-[16.5px] text-[#a9b0b8]">Type here to search</span>
        <svg width="15" height="20" viewBox="0 0 16 24" preserveAspectRatio="none" fill="none" stroke="#a0a0a0" strokeWidth="1.500"><rect x="4" y="1" width="8" height="15" rx="3" fill="#a0a0a0" /><path d="M1 11c0 9 14 9 14 0M8 18v5M4 23h8" /></svg>
      </div>
      <Slot><svg width="24" height="17" viewBox="0 0 24 22" preserveAspectRatio="none" fill="none" stroke="#fff"><path d="M4.500 1.500h15v19h-15z" strokeWidth="1.500" /><path d="M2.500 5H.500v12h2M21.500 5h2v12h-2" /></svg></Slot>
      <Slot on>
        <svg width="28" height="23" viewBox="0 0 28 28" preserveAspectRatio="none">
          <path d="M0 3a2 2 0 0 1 2-2h9l2 2h13a2 2 0 0 1 2 2v19H0z" fill="#f4d276" /><path d="M0 6h28v3H0z" fill="#e7bd55" /><rect x="3" y="1" width="7" height="3" fill="#fff" /><path d="M5 15h18v13h-5v-5h-8v5H5z" fill="#27a6e1" /><rect x="10" y="23" width="8" height="3" fill="#f4d276" />
        </svg>
      </Slot>
      <Slot>
        <svg width="27" height="28" viewBox="0 0 30 34" preserveAspectRatio="none">
          <path d="M15 0l2 4h-4zM15 34l-2-4h4zM0 17l4-2v4zM30 17l-4 2v-4z" fill="#9a9a9a" />
          <circle cx="15" cy="17" r="12" fill="none" stroke="#5a5a5a" strokeWidth="1.500" />
          <path d="M15 6c6 0 8 5 7 9s-4 10-7 10-6-6-7-10 1-9 7-9z" fill="#bdbdbd" />
          <path d="M9 15l4 3-1 2zM21 15l-4 3 1 2z" fill="#222" />
        </svg>
      </Slot>
      <Slot on>
        <svg width="30" height="23" viewBox="0 0 30 28" preserveAspectRatio="none" fill="#fff"><path d="M15 0l15 8H0z" /><path d="M0 10l12 6L30 28H0zM30 10v17L20 17z" /></svg>
      </Slot>
      <Slot on extra>
        <svg width="28" height="28" viewBox="0 0 28 34" preserveAspectRatio="none">
          <ellipse cx="14" cy="17" rx="14" ry="17" fill="#dd4b3e" />
          <path d="M0 17a14 17 0 0 0 14 17l7-12-7-5z" fill="#0f9d58" />
          <path d="M14 10h12a14 17 0 0 1-12 24l7-12z" fill="#fcc934" />
          <circle cx="14" cy="17" r="7.500" fill="#fff" /><circle cx="14" cy="17" r="5.500" fill="#4a86e8" />
        </svg>
      </Slot>
      <Slot on>
        <svg width="22" height="22" viewBox="0 0 23 29" preserveAspectRatio="none"><path d="M0 0h23v16l-12 13H0z" fill="#fff" /><path d="M23 16L11 29V16z" fill="#0b0b0b" /></svg>
      </Slot>
      <Slot on>
        <svg width="25" height="28" viewBox="0 0 27 34" preserveAspectRatio="none">
          <ellipse cx="13.500" cy="14" rx="13" ry="14" fill="#80b34d" />
          <circle cx="13.500" cy="12" r="4" fill="none" stroke="#4a5b44" strokeWidth="2.500" />
          <path d="M13 2v6" stroke="#4a5b44" strokeWidth="2" />
          <path d="M11 15L3 34M16 15l8 19M6 26h15" stroke="#e8e8e8" strokeWidth="2" fill="none" />
        </svg>
      </Slot>
      <Slot on bg>
        <svg width="28" height="28" viewBox="0 0 30 34" preserveAspectRatio="none">
          <rect x="14" y="6" width="16" height="23" fill="#fff" stroke="#d24726" />
          <path d="M18 11h9M18 15h9M18 19h9M18 23h9" stroke="#d24726" />
          <path d="M0 4L17 0v34L0 30z" fill="#d24726" />
          <text x="4" y="23" fontSize="15" fontWeight="700" fill="#fff" fontFamily="Liberation Sans, sans-serif">P</text>
        </svg>
      </Slot>
      <Slot on>
        <svg width="28" height="29" viewBox="0 0 29 35" preserveAspectRatio="none">
          <ellipse cx="14.500" cy="17.500" rx="14.500" ry="17.500" fill="#c8c8c8" />
          <ellipse cx="14.500" cy="17.500" rx="13" ry="16" fill="#6e3d96" />
          <path d="M7 7l3 2h9l3-2v6c1 4 0 9-5 10 1 1 1 2 1 3v8h-7v-3c-3 1-5 0-6-3 2 1 3 2 6 1 0-3 0-4 1-6-5-1-6-6-5-10z" fill="#eee" />
        </svg>
      </Slot>
      <div className="ml-auto flex h-[50px] items-center">
        <svg width="20" height="20" viewBox="0 0 20 20" fill="none" stroke="#fff" strokeWidth="1.300" className="mx-[5px]">
          <circle cx="13.500" cy="5" r="3.500" /><circle cx="6" cy="10" r="3" /><path d="M1 19c0-3 2-5 5-5s4 2 5 5M12 10c3-1 6 0 7 4" />
        </svg>
        <span className="w-[15px]" />
        <svg width="30" height="10" viewBox="0 0 30 10" fill="none" stroke="#fff"><path d="M7 9l8-8 8 8" /></svg>
        <svg width="30" height="14" viewBox="0 0 30 14" fill="#fff"><path d="M5 13a3 3 0 0 1 0-6 6 6 0 0 1 11-3 5 5 0 0 1 6 4 3 3 0 0 1 3 5z" /></svg>
        <svg width="30" height="12" viewBox="0 0 30 12" fill="none" stroke="#fff"><path d="M5.500 1.500h18v9h-18z" /><rect x="7" y="3" width="15" height="6" fill="#fff" stroke="none" /><path d="M25 4v4" /></svg>
        <svg width="30" height="18" viewBox="0 0 30 18" fill="none" stroke="#fff"><path d="M5 6h4l4-4v14l-4-4H5z" /><path d="M16 6c2 2 2 4 0 6" /><path d="M20 3c3 4 3 8 0 12M23 1c4 5 4 11 0 16" stroke="#888" /></svg>
        <div className="w-[84px] text-center text-[14px] leading-[22px]">
          <div>9:32 PM</div>
          <div>3/24/2018</div>
        </div>
        <div className="relative flex h-[50px] w-[50px] items-center">
          <svg width="20" height="18" viewBox="0 0 20 18" className="ml-[15px]"><path d="M0 0h20v15h-8l-4 3v-3H0z" fill="#fff" /><path d="M3 4h14M3 7h14M3 10h10" stroke="#222" /></svg>
          <span className="absolute left-[24px] top-[25px] flex h-[21px] w-[21px] items-center justify-center rounded-full border border-[#777] bg-[#333] text-[12px] font-bold">7</span>
        </div>
        <span className="h-[50px] w-[11px]" />
        <span className="h-[50px] w-px bg-[#666]" />
        <span className="w-[4px]" />
      </div>
    </div>
  );
}

export default function App() {
  return (
    <div className="h-[1080px] w-[1920px] overflow-hidden font-['Open_Sans','Noto_Sans',sans-serif]">
      <TitleBar />
      <Ribbon />
      <Main />
      <StatusBar />
      <Taskbar />
    </div>
  );
}
